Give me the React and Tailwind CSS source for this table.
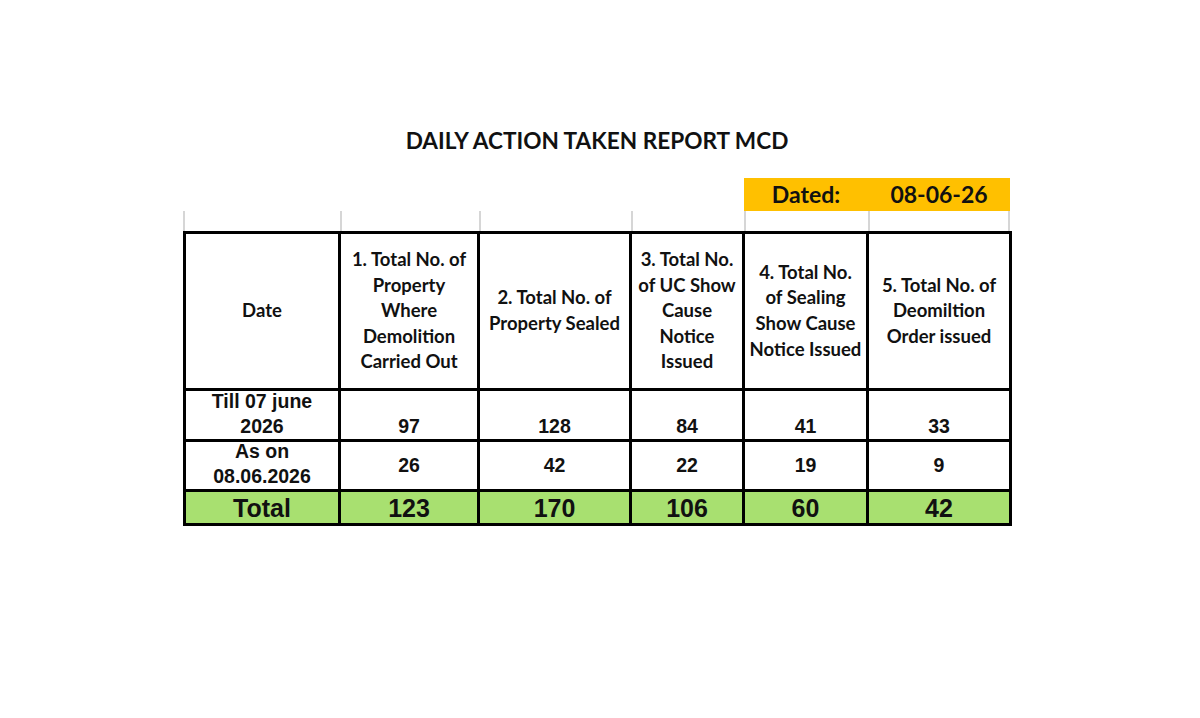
const cols = [155, 139, 152, 113, 124, 143];

const headers = [
  ['Date'],
  ['1. Total No. of', 'Property', 'Where', 'Demolition', 'Carried Out'],
  ['2. Total No. of', 'Property Sealed'],
  ['3. Total No.', 'of UC Show', 'Cause', 'Notice', 'Issued'],
  ['4. Total No.', 'of Sealing', 'Show Cause', 'Notice Issued'],
  ['5. Total No. of', 'Deomiltion', 'Order issued'],
];

const rows = [
  { label: ['Till 07 june', '2026'], values: [97, 128, 84, 41, 33], h: 'h-[48px]', align: 'justify-end' },
  { label: ['As on', '08.06.2026'], values: [26, 42, 22, 19, 9], h: 'h-[47px]', align: 'justify-center' },
];

const totals = [123, 170, 106, 60, 42];

const lato = { fontFamily: 'Lato, "Open Sans", sans-serif' };
const arial = { fontFamily: '"Liberation Sans", Arial, sans-serif' };

export default function App() {
  return (
    <div className="min-h-[718px] w-[1200px] bg-white text-[#111]">
      <div className="ml-[183px] w-[828px] pt-[123px]">
        <h1 className="text-center text-[22.6px] font-bold leading-[35px]" style={lato}>
          DAILY ACTION TAKEN REPORT MCD
        </h1>

        <div className="mt-[20px] grid grid-cols-[157px_139px_152px_113px_124px_142px]">
          <div className="col-span-4" />
          <div className="col-span-2 flex h-[33px] bg-[#ffc000] text-[23px] font-bold leading-[33px]" style={lato}>
            <span className="w-[124px] text-center">Dated:</span>
            <span className="w-[142px] text-center">08-06-26</span>
          </div>
          {cols.map((w, i) => (
            <div
              key={i}
              className={`h-[20px] border-l-2 border-[#d6d6d6] ${i === cols.length - 1 ? 'border-r-2' : ''}`}
            />
          ))}
        </div>

        <table className="table-fixed border-collapse border-[3px] border-black" style={{ width: 826 }}>
          <colgroup>
            {cols.map((w, i) => (
              <col key={i} style={{ width: w }} />
            ))}
          </colgroup>
          <thead>
            <tr>
              {headers.map((h, i) => (
                <th key={i} className="border-[3px] border-black p-0 font-bold" style={lato}>
                  <div className="flex h-[154px] flex-col items-center justify-center whitespace-nowrap text-[18.5px] leading-[25.6px]">
                    {h.map((line, j) => (
                      <div key={j}>{line}</div>
                    ))}
                  </div>
                </th>
              ))}
            </tr>
          </thead>
          <tbody style={arial}>
            {rows.map((r, ri) => (
              <tr key={ri}>
                <td className="border-[3px] border-black p-0 font-bold">
                  <div className={`flex ${r.h} flex-col items-center justify-end whitespace-nowrap text-[19.5px] leading-[25px]`}>
                    <div>{r.label[0]}</div>
                    <div>{r.label[1]}</div>
                  </div>
                </td>
                {r.values.map((v, i) => (
                  <td key={i} className="border-[3px] border-black p-0 font-bold">
                    <div className={`flex ${r.h} flex-col items-center ${r.align} text-[19.5px] leading-[25px]`}>
                      {v}
                    </div>
                  </td>
                ))}
              </tr>
            ))}
            <tr className="bg-[#a8e070]">
              {['Total', ...totals].map((v, i) => (
                <td key={i} className="border-[3px] border-black p-0 font-bold">
                  <div className="flex h-[31px] items-center justify-center text-[25px] leading-[28px]">{v}</div>
                </td>
              ))}
            </tr>
          </tbody>
        </table>
      </div>
    </div>
  );
}
